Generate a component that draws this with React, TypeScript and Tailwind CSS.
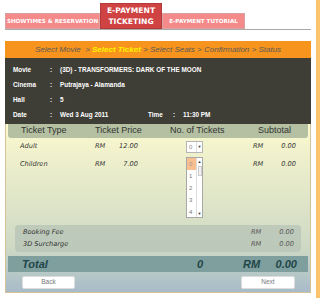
import { useState } from "react";

const info = [
  { label: "Movie", value: "(3D) - TRANSFORMERS: DARK OF THE MOON" },
  { label: "Cinema", value: "Putrajaya - Alamanda" },
  { label: "Hall", value: "5" },
];

const tickets = [
  { type: "Adult", price: "12.00" },
  { type: "Children", price: "7.00" },
];

function Money({ a, b, className }: { a: string; b: string; className?: string }) {
  return (
    <div className={"flex justify-between " + (className ?? "")}>
      <span>{a}</span>
      <span>{b}</span>
    </div>
  );
}

export default function App() {
  const [open] = useState(true);

  return (
    <div className="flex w-[320px] h-[298px] bg-white font-['Liberation_Sans',Arial,sans-serif] overflow-hidden">
      <div className="w-[316px] px-[5px]">
        {/* tabs */}
        <div className="h-[30px] flex items-end border-b border-[#a9a9a9] font-['DejaVu_Sans',sans-serif] font-bold text-white whitespace-nowrap">
          <div className="w-[95px] h-[16px] bg-[#f58a8a] border border-[#d9a3a3] flex items-center justify-center text-[5.6px]">
            SHOWTIMES &amp; RESERVATION
          </div>
          <div className="w-[62px] h-[26px] bg-[#cf4343] border border-[#b33a3a] flex flex-col items-center justify-center text-[7.6px] leading-[11px]">
            <span>E-PAYMENT</span>
            <span>TICKETING</span>
          </div>
          <div className="w-[83px] h-[16px] bg-[#f58a8a] border border-[#d9a3a3] flex items-center justify-center text-[5.6px]">
            E-PAYMENT TUTORIAL
          </div>
        </div>

        {/* steps */}
        <div className="mt-[11px] h-[17px] bg-[#f7941d] flex items-center justify-center text-[8px] italic text-[#5a5a5a] whitespace-pre">
          <span>Select Movie  &gt; </span>
          <span className="font-bold text-[#fff200]">Select Ticket</span>
          <span> &gt; Select Seats &gt; Confirmation &gt; Status</span>
        </div>

        {/* details */}
        <div className="h-[66px] bg-[#3e3e36] pt-[4px] text-white font-bold text-[6.4px]">
          {info.map((r) => (
            <div key={r.label} className="h-[15px] flex items-center">
              <span className="w-[37px] pl-[8px] box-content">{r.label}</span>
              <span className="w-[10px]">:</span>
              <span>{r.value}</span>
            </div>
          ))}
          <div className="h-[15px] flex items-center">
            <span className="w-[37px] pl-[8px] box-content">Date</span>
            <span className="w-[10px]">:</span>
            <span className="w-[88px]">Wed 3 Aug 2011</span>
            <span className="w-[25px]">Time</span>
            <span className="w-[10px]">:</span>
            <span>11:30 PM</span>
          </div>
        </div>

        {/* ticket panel */}
        <div className="h-[169px] border-x border-b border-[#d6c29a] px-[2px] bg-linear-to-b from-[#fbf9cf] via-[#cdd8c4] via-75% to-[#a7bbc9] flex flex-col">
          <div className="h-[14px] rounded-b-[3px] bg-[#b4c0a1] flex items-center pl-[13px] text-[9px] text-[#333]">
            <span className="w-[74px]">Ticket Type</span>
            <span className="w-[75px]">Ticket Price</span>
            <span className="w-[88px]">No. of Tickets</span>
            <span>Subtotal</span>
          </div>

          {tickets.map((t, i) => (
            <div key={t.type} className="h-[18px] flex items-center pl-[12px] font-['DejaVu_Sans',sans-serif] italic text-[6.6px] text-[#333]">
              <span className="w-[75px]">{t.type}</span>
              <Money a="RM" b={t.price} className="w-[43px]" />
              <div className="w-[48px]" />
              <div className="relative w-[17px] h-[12px]">
                {i === 0 && (
                  <div className="w-full h-full bg-white border border-[#b5b5b5] flex font-['Liberation_Sans',sans-serif] not-italic text-[6px] text-[#888]">
                    <span className="flex-1 pl-[2px] leading-[10px]">0</span>
                    <span className="w-[6px] border-l border-[#ddd] flex items-center justify-center text-[#333] text-[4px]">▼</span>
                  </div>
                )}
                {open && i === 0 && (
                  <div className="absolute left-0 top-[16px] w-[17px] h-[61px] bg-white border border-[#a8a8a8] flex z-10 font-['Liberation_Sans',sans-serif] not-italic text-[6px] text-[#777]">
                    <div className="flex-1 flex flex-col">
                      {["0", "1", "2", "3", "4"].map((n) => (
                        <span key={n} className={"h-[12.2px] pl-[2px] leading-[12px] " + (n === "0" ? "bg-[#f9bf8f] text-[#999]" : "")}>
                          {n}
                        </span>
                      ))}
                    </div>
                    <div className="w-[6px] border-l border-[#ddd] flex flex-col items-center text-[4px] text-[#333]">
                      <span className="h-[7px] leading-[7px]">▲</span>
                      <span className="w-[4px] h-[10px] mt-[1px] border border-[#ccc] bg-[#f2f2f2]" />
                      <span className="mt-auto h-[7px] leading-[7px]">▼</span>
                    </div>
                  </div>
                )}
              </div>
              <div className="w-[50px]" />
              <Money a="RM" b="0.00" className="w-[43px]" />
            </div>
          ))}

          {/* fees */}
          <div className="mt-[51px] mx-[7px] h-[27px] rounded-[4px] bg-[#b8c4b6]/80 pt-[2px] pl-[8px] pr-[7px] font-['DejaVu_Sans',sans-serif] italic text-[6.6px] text-[#333]">
            <div className="h-[12px] flex items-center justify-between">
              <span>Booking Fee</span>
              <Money a="RM" b="0.00" className="w-[43px] text-[#555]" />
            </div>
            <div className="h-[12px] flex items-center justify-between">
              <span>3D Surcharge</span>
              <Money a="RM" b="0.00" className="w-[43px] text-[#555]" />
            </div>
          </div>

          {/* total */}
          <div className="mt-[4px] h-[16px] bg-[#7f9e9e] flex items-center pl-[14px] italic font-bold text-[11px] text-[#1e4648]">
            <span className="w-[175px]">Total</span>
            <span className="w-[46px]">0</span>
            <Money a="RM" b="0.00" className="w-[54px]" />
          </div>

          {/* buttons */}
          <div className="flex justify-between items-center h-[20px] pl-[14px] pr-[13px] text-[6.5px] text-[#777]">
            <button className="w-[53px] h-[13px] bg-white rounded-[2px] border border-[#ddd]">Back</button>
            <button className="w-[54px] h-[13px] bg-white rounded-[2px] border border-[#ddd]">Next</button>
          </div>
        </div>
      </div>
      <div className="w-[4px] bg-[#fcc46a]" />
    </div>
  );
}
